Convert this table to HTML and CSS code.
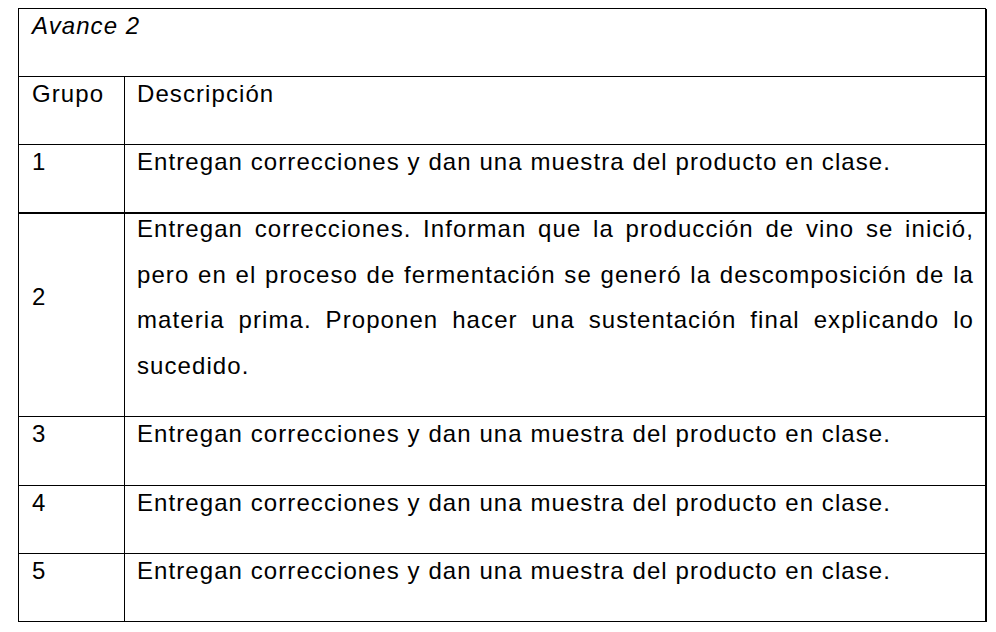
FILE: index.html
```html
<!DOCTYPE html>
<html lang="es">
<head>
<meta charset="utf-8">
<title>Avance 2</title>
<link rel="stylesheet" href="styles.css">
</head>
<body>
<div class="table">
  <div class="cell span h-68"><span class="title">Avance 2</span></div>
  <div class="cell num h-68">Grupo</div>
  <div class="cell desc h-68">Descripción</div>
  <div class="cell num h-69 thick-bottom">1</div>
  <div class="cell desc h-69 thick-bottom">Entregan correcciones y dan una muestra del producto en clase.</div>
  <div class="cell num h-203 mid">2</div>
  <div class="cell desc h-203">
    <div class="para">
      <span class="jline">Entregan correcciones. Informan que la producción de vino se inició,</span>
      <span class="jline">pero en el proceso de fermentación se generó la descomposición de la</span>
      <span class="jline">materia prima. Proponen hacer una sustentación final explicando lo</span>
      <span class="line">sucedido.</span>
    </div>
  </div>
  <div class="cell num h-69">3</div>
  <div class="cell desc h-69">Entregan correcciones y dan una muestra del producto en clase.</div>
  <div class="cell num h-68">4</div>
  <div class="cell desc h-68">Entregan correcciones y dan una muestra del producto en clase.</div>
  <div class="cell num h-68">5</div>
  <div class="cell desc h-68">Entregan correcciones y dan una muestra del producto en clase.</div>
</div>
</body>
</html>
```
FILE: styles.css
```css
html, body {
  margin: 0;
  padding: 0;
  background: #ffffff;
}

body {
  font-family: "Liberation Sans", Arial, sans-serif;
  font-size: 24px;
  color: #000000;
  letter-spacing: 1.08px;
}

.table {
  margin: 8px 0 0 18px;
  width: 968px;
  box-sizing: border-box;
  display: grid;
  grid-template-columns: 106px 862px;
  border-top: 1px solid #000;
  border-left: 1px solid #000;
}

.cell {
  box-sizing: border-box;
  border-right: 1px solid #000;
  border-bottom: 1px solid #000;
  line-height: 28px;
  padding-top: 3px;
  overflow: hidden;
}

.span {
  grid-column: 1 / 3;
  padding-left: 13px;
  border-right: 2px solid #000;
}

.title {
  font-style: italic;
}

.num {
  padding-left: 13px;
}

.mid {
  padding-top: 69px;
}

.desc {
  padding-left: 12px;
  padding-right: 11px;
  border-right: 2px solid #000;
}

.thick-bottom {
  border-bottom-width: 2px;
}

.h-68 { height: 68px; }
.h-69 { height: 69px; }
.h-203 { height: 203px; }

.para {
  margin-top: -11px;
  line-height: 45.6px;
}

.jline {
  display: block;
  white-space: nowrap;
  text-align: justify;
  text-align-last: justify;
}

.line {
  display: block;
}
```
